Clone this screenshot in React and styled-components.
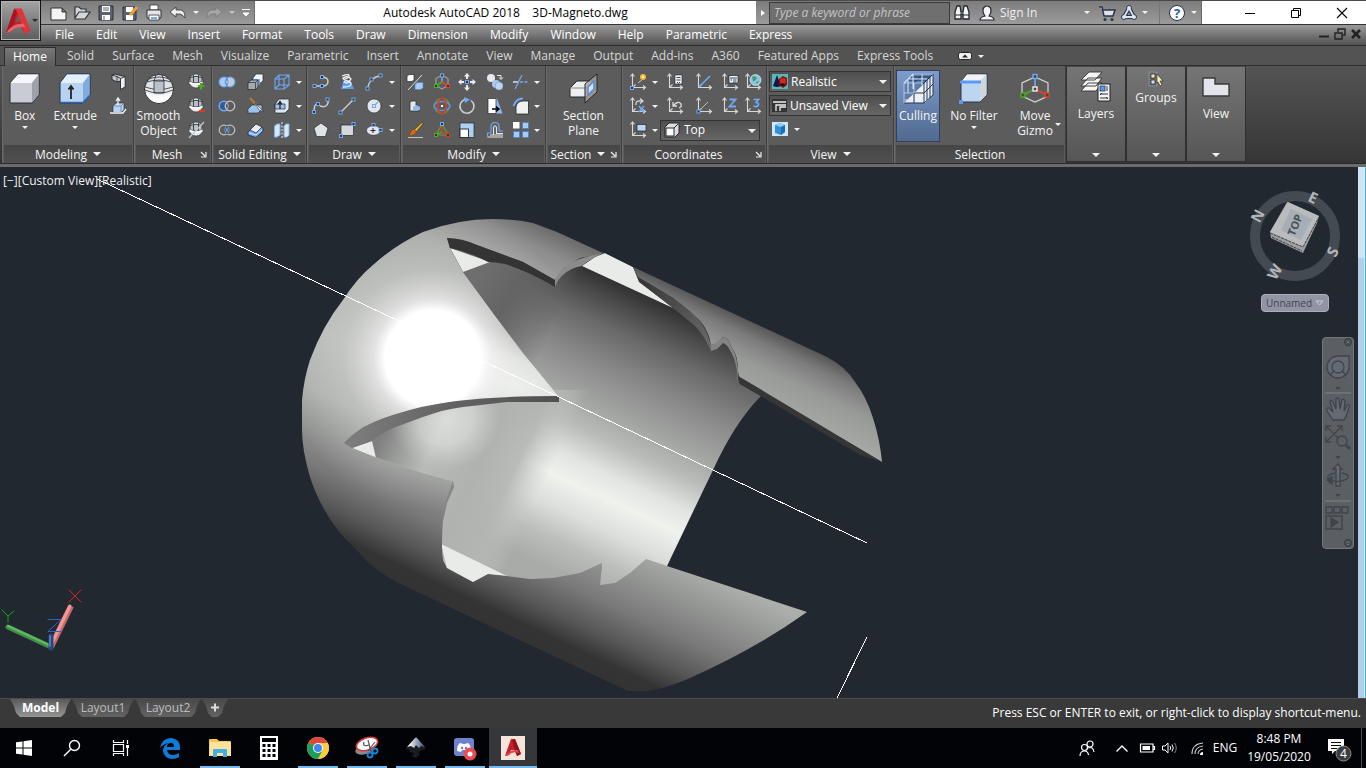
import React from 'react';
import styled, { createGlobalStyle, css } from 'styled-components';

const GlobalStyle = createGlobalStyle`
  * { box-sizing: border-box; }
  html, body { margin: 0; padding: 0; background: #212830; }
  body, button, input, select {
    font-family: "Open Sans", "Noto Sans", sans-serif;
    font-size: 12px;
    line-height: 15px;
  }
  button { margin: 0; padding: 0; border: 0; background: none; color: inherit; cursor: pointer; }
`;

/* ---------- shared parts ---------- */

const Page = styled.div`
  display: flex;
  flex-direction: column;
  min-height: 100vh;
`;

const Svg = styled.svg`
  display: block;
  flex: none;
  overflow: visible;
  width: ${(p) => p.$w || p.$s || 18}px;
  height: ${(p) => p.$h || p.$s || 18}px;
`;

const Caret = styled.span`
  display: block;
  flex: none;
  width: 0;
  height: 0;
  border: ${(p) => p.$size || 3}px solid transparent;
  border-top-color: ${(p) => p.$color || '#f2f2f2'};
  border-bottom: 0;
`;

/* ---------- header ---------- */

const Header = styled.header`
  display: grid;
  grid-template-columns: 41px 1fr;
  grid-template-rows: 24px 22px;
  background: #fff;
`;

const AppButton = styled.button`
  grid-area: 1 / 1 / 3 / 2;
  z-index: 1;
  height: 41px;
  border: 1px solid #111;
  background: linear-gradient(#a4a4a4, #5c5c5c);
  box-shadow: inset 0 0 0 1px #b4b4b4;
  display: flex;
  align-items: center;
  justify-content: center;
`;

const TitleRow = styled.div`
  grid-area: 1 / 2;
  display: flex;
  border-top: 1px solid #4a4a4a;
`;

const barGray = css`
  background: linear-gradient(#7c7c7c, #9b9b9b);
  border-right: 1px solid #6a6a6a;
`;

const QuickBar = styled.div`
  ${barGray}
  width: 214px;
  display: flex;
  align-items: center;
  padding-left: 8px;
  gap: 6px;
`;

const FlatButton = styled.button`
  display: flex;
  align-items: center;
  justify-content: center;
  height: 100%;
`;

const Title = styled.h1`
  flex: 1;
  margin: 0;
  font-size: 12px;
  font-weight: 400;
  line-height: 23px;
  text-align: center;
  white-space: pre;
  color: #000;
`;

const InfoCenter = styled.div`
  ${barGray}
  width: 446px;
  display: flex;
  align-items: center;
`;

const ArrowTab = styled.button`
  width: 13px;
  height: 22px;
  color: #fff;
  display: flex;
  align-items: center;
  justify-content: center;
`;

const Search = styled.input`
  width: 181px;
  height: 22px;
  border: 1px solid #3a3a3a;
  background: #6f6f6f;
  color: #fff;
  padding: 0 4px;
  font-style: italic;
  &::placeholder { color: #c4c4c4; opacity: 1; }
`;

const InfoIcons = styled.div`
  flex: 1;
  display: flex;
  align-items: center;
  gap: 4px;
  padding: 0 4px 0 2px;
  color: #f0f0f0;
  height: 100%;
`;

const SignIn = styled.button`
  flex: 1;
  display: flex;
  align-items: center;
  gap: 4px;
  padding: 0 4px 0 2px;
`;

const SignInText = styled.span`
  flex: 1;
  text-align: left;
`;

const Divider = styled.span`
  width: 1px;
  margin: 0 3px 0 7px;
  align-self: stretch;
  background: #777;
`;

const WindowButtons = styled.div`
  width: 164px;
  display: grid;
  grid-template-columns: repeat(3, 46px);
  justify-content: end;
  padding-right: 1px;
`;

const MenuBar = styled.nav`
  grid-area: 2 / 1 / 3 / 3;
  display: flex;
  align-items: center;
  justify-content: space-between;
  padding: 0 4px 2px 55px;
  background: linear-gradient(#9a9a9a, #515151);
  border-top: 1px solid #333;
  border-bottom: 1px solid #2c2c2c;
  color: #fff;
`;

const MenuItems = styled.div`
  display: flex;
  gap: 22px;
`;

const DocButtons = styled.div`
  display: flex;
  align-items: center;
  gap: 4px;
`;

/* ---------- ribbon ---------- */

const TabStrip = styled.div`
  display: flex;
  align-items: flex-end;
  height: 20px;
  padding-left: 4px;
  background: #535353;
  border-bottom: 1px solid #2e2e2e;
`;

const RibbonTab = styled.button`
  height: 18px;
  padding: 0 ${(p) => (p.$active ? 8 : 9)}px;
  line-height: 16px;
  color: ${(p) => (p.$active ? '#fff' : '#d6d6d6')};
  ${(p) => p.$active && css`
    height: 19px;
    margin-bottom: -1px;
    margin-right: 2px;
    background: linear-gradient(#787878, #5c5c5c);
    border: 1px solid #2e2e2e;
    border-bottom: 0;
  `}
`;

const Collapse = styled.button`
  display: flex;
  align-items: center;
  gap: 6px;
  height: 18px;
  margin-left: 16px;
`;

const Ribbon = styled.div`
  display: flex;
  height: 101px;
  padding-left: 2px;
  background: linear-gradient(#545454, #353535);
  border-bottom: 3px solid #6b6b6b;
  box-shadow: inset 0 -1px 0 #2a2a2a;
  color: #f4f4f4;
`;

const Panel = styled.section`
  width: ${(p) => p.$w}px;
  display: flex;
  flex-direction: column;
  background: #5c5c5c;
  border-right: 1px solid #3f3f3f;
  box-shadow: inset 1px 0 0 #6a6a6a;
  margin-bottom: 1px;
`;

const PanelBody = styled.div`
  flex: 1;
  display: flex;
  padding: 4px ${(p) => p.$px || 0}px 0;
`;

const PanelTitle = styled.h2`
  margin: 0 1px 0 2px;
  padding-right: ${(p) => (p.$launcher ? 12 : 0)}px;
  height: 18px;
  font-size: 12px;
  font-weight: 400;
  line-height: 17px;
  background: linear-gradient(#464646, #505050);
  display: flex;
  align-items: center;
  justify-content: center;
  gap: 6px;
  position: relative;
`;

const Launcher = styled.button`
  position: absolute;
  right: 3px;
  top: 6px;
`;

const IconGrid = styled.div`
  display: grid;
  grid-template-columns: ${(p) => p.$cols};
  grid-auto-rows: 24px;
  align-content: start;
`;

const IconButton = styled.button`
  display: grid;
  place-items: center;
  min-width: 0;
`;

const BigButton = styled.button`
  width: ${(p) => p.$w}px;
  height: 72px;
  padding-top: 2px;
  display: flex;
  flex-direction: column;
  align-items: center;
  position: relative;
  border: 1px solid transparent;
  ${(p) => p.$on && css`
    background: linear-gradient(#7d9ccb, #50698f);
    border-color: #2f4060;
  `}
`;

const BigLabel = styled.span`
  margin: 3px 0;
  white-space: pre-line;
  text-align: center;
`;

const SideCaret = styled.span`
  position: absolute;
  right: 0;
  bottom: 15px;
`;

const Drop = styled.div`
  position: relative;
  display: flex;
  align-items: center;
  align-self: center;
  grid-column: ${(p) => (p.$wide ? 'span 4' : 'auto')};
  width: ${(p) => (p.$wide ? '100px' : 'auto')};
  height: 21px;
  padding-left: 2px;
  border: 1px solid #333;
  background: linear-gradient(#4f4f4f, #666);
  & > ${Caret} { position: absolute; right: 3px; top: 8px; pointer-events: none; }
`;

const DropSelect = styled.select`
  appearance: none;
  flex: 1;
  min-width: 0;
  height: 19px;
  border: 0;
  padding: 0 0 1px 3px;
  background: transparent;
  color: #fff;
`;

const ViewStack = styled.div`
  width: 122px;
  display: flex;
  flex-direction: column;
  gap: 3px;
  padding-top: 1px;
  & > ${Drop} { align-self: stretch; }
`;

const ViewCubeButton = styled.button`
  display: flex;
  align-items: center;
  gap: 6px;
  padding: 3px 0 0 3px;
`;

const Folded = styled.button`
  width: 60px;
  height: 96px;
  display: flex;
  flex-direction: column;
  align-items: center;
  padding: 4px 0;
  background: linear-gradient(#757575, #565656);
  border: 1px solid #303030;
  border-top-color: #4a4a4a;
  & > ${Caret} { margin-top: auto; }
`;

const FoldedLabel = styled.span`
  margin-top: 3px;
`;

/* ---------- drawing area ---------- */

const Workspace = styled.main`
  flex: 1;
  display: flex;
  min-height: 400px;
  border-bottom: 1px solid #4e4a50;
`;

const Viewport = styled.div`
  flex: 1;
  position: relative;
  background: #212830;
  overflow: hidden;
`;

const Drawing = styled.svg`
  position: absolute;
  inset: 0;
  width: 100%;
  height: 100%;
`;

const ViewLabel = styled.div`
  position: absolute;
  left: 3px;
  top: 6px;
  color: #f0f0f0;
`;

const Compass = styled.div`
  position: absolute;
  right: 16px;
  top: 22px;
  display: flex;
  flex-direction: column;
  align-items: center;
  gap: 11px;
`;

const UcsMenu = styled.button`
  width: 68px;
  height: 18px;
  border-radius: 4px;
  background: #9195a3;
  border: 1px solid #aaaebb;
  color: #40454f;
  font-size: 10px;
  display: flex;
  align-items: center;
  justify-content: space-between;
  padding: 0 4px;
`;

const NavBar = styled.div`
  position: absolute;
  right: 4px;
  top: 170px;
  width: 32px;
  height: 212px;
  border-radius: 4px;
  background: #5b5f63;
  border: 1px solid #74787b;
`;

const SideStrip = styled.div`
  width: 8px;
  background: linear-gradient(#d3e3f3 0 90px, #b4cde9 92px);
  border-right: 1px solid #30b7e8;
  box-shadow: inset -1px 0 0 #d9ecfa;
`;

const StatusBar = styled.div`
  height: 29px;
  display: flex;
  justify-content: space-between;
  padding: 0 5px 0 10px;
  background: #393939;
  color: #fff;
`;

const LayoutTabs = styled.div`
  display: flex;
  gap: 1px;
`;

const LayoutTab = styled.button`
  height: 18px;
  width: ${(p) => p.$w}px;
  padding-bottom: 2px;
  clip-path: polygon(0 0, 100% 0, calc(100% - 4px) 7px, calc(100% - 6px) 14px, calc(100% - 10px) 100%, 10px 100%, 6px 14px, 4px 7px);
  background: ${(p) => (p.$active ? 'linear-gradient(#5a5a5a, #959595)' : 'linear-gradient(#484848, #636363)')};
  color: ${(p) => (p.$active ? '#fff' : '#bdbdbd')};
  font-weight: ${(p) => (p.$active ? 700 : 400)};
`;

const Prompt = styled.p`
  margin: 0;
  line-height: 28px;
`;

/* ---------- taskbar ---------- */

const Taskbar = styled.footer`
  height: 40px;
  display: flex;
  justify-content: space-between;
  background: #020307;
  color: #fff;
`;

const TaskGroup = styled.div`
  display: flex;
`;

const Task = styled.button`
  width: ${(p) => p.$w || 49}px;
  height: 40px;
  display: grid;
  place-items: center;
  background: ${(p) => (p.$active ? '#35373b' : 'transparent')};
  ${(p) => p.$open && css`
    background-image: linear-gradient(#76b9ed, #76b9ed);
    background-repeat: no-repeat;
    background-position: bottom center;
    background-size: ${p.$active ? '100%' : '40px'} 2px;
  `}
`;

const Tray = styled.div`
  display: flex;
  align-items: center;
  padding-right: 4px;
`;

const TrayButton = styled.button`
  width: ${(p) => p.$w}px;
  height: 40px;
  display: grid;
  place-items: center;
  line-height: 18px;
  white-space: pre-line;
`;

const ShowDesktop = styled.button`
  width: 1px;
  height: 40px;
  background: #4c4f55;
`;

/* ---------- icons ---------- */

const B = '#6ea8f7';
const W = '#f2f2f2';
const K = '#23262b';

const Handle = ({ x, y, c = B }) => (
  <rect x={x - 1.5} y={y - 1.5} width="3" height="3" fill="#333" stroke={c} />
);

const Globe = ({ extra }) => (
  <>
    <circle cx="8" cy="8" r="7" fill="#e8eaec" stroke={K} strokeWidth=".6" />
    <path d="M2 4.500Q8 2 14 4.500L14 9Q8 11 2 9ZM5.500 2V9.500M10.500 2V9.500" fill="#b8bfc7" stroke="#30353b" strokeWidth=".9" />
    <path d="M1.500 9.500Q8 12.500 14.500 9.500" stroke="#fff" strokeWidth="1.500" fill="none" />
    {extra}
  </>
);

const Axes = ({ children }) => (
  <>
    <path d="M3.500 1.500V14.500H16M1.500 3.500L3.500 1L5.500 3.500M14 12.500L16.500 14.500L14 16.500M3.500 14.500L6.500 11.500" fill="none" stroke="#d8d8d8" strokeWidth="1.100" />
    {children}
  </>
);

const icons = {
  presspull: <><path d="M3 2L6 1L16 3.500V14L11.500 16.500V8L8 9L3 6.500Z" fill="#c3c8ce" stroke={K} strokeWidth=".9" /><path d="M3 2L8 3.500V9M8 3.500L11.500 5.500V8M11.500 5.500L16 3.500" fill="none" stroke={K} strokeWidth=".8" /><path d="M12 6.500L15.500 4.500V13.500L12 15.500Z" fill="#eef0f3" /></>,
  polysolid: <><path d="M4 9L7 6H15V13L12 15.500H4Z" fill="#b9d3ee" stroke={K} strokeWidth=".6" /><path d="M4 9H12V15.500M12 9L15 6" fill="none" stroke="#5f87b5" strokeWidth=".8" /><path d="M9 8V2M7 4L9 1L11 4M1 16H14L17 12" fill="none" stroke={W} strokeWidth="1.300" /></>,
  smoothMore: <Globe extra={<path d="M13 10V16.500M10 13H16.500" stroke="#4fae12" strokeWidth="2" />} />,
  smoothLess: <Globe extra={<path d="M11 14H17" stroke="#e23a20" strokeWidth="2.200" />} />,
  refine: <Globe extra={<path d="M1 17L16 1" stroke="#c8c8c8" strokeWidth="1.200" />} />,
  union: <><circle cx="6" cy="9" r="4.800" fill="#aecbf0" stroke={B} strokeWidth="1.300" /><circle cx="12" cy="9" r="4.800" fill="#dbe8f8" fillOpacity=".8" stroke={B} strokeWidth="1.300" /><path d="M9 5.500Q6.500 9 9 12.500Q11.500 9 9 5.500" fill="#e9f1fb" stroke="#4d83c8" /></>,
  subtract: <><circle cx="6" cy="9" r="4.800" fill="#335c94" stroke={B} strokeWidth="1.500" /><circle cx="12" cy="9" r="4.800" fill="#5c5c5c" stroke="#c9c9c9" strokeWidth="1.200" /><path d="M9 5.200Q12 9 9 12.800" fill="none" stroke="#aaa" /></>,
  intersect: <><circle cx="6" cy="9" r="4.800" fill="none" stroke="#c0c0c0" strokeWidth="1.200" /><circle cx="12" cy="9" r="4.800" fill="none" stroke="#c0c0c0" strokeWidth="1.200" /><path d="M9 5Q6 9 9 13Q12 9 9 5" fill="#75aef2" stroke="#2d578f" /></>,
  thicken: <><path d="M6 5L9 1H16V8L12 11H6Z" fill="#f2f4f6" stroke={K} strokeWidth=".7" /><path d="M4 9L7 6H13V11L10 14H4Z" fill="#6ea8f7" /><path d="M1 9.500L4 7H11V14L8.500 16.500H1Z" fill="#a6a9ae" stroke={K} strokeWidth=".7" /><path d="M1 9.500H8.500V16.500M8.500 9.500L11 7" fill="none" stroke={K} strokeWidth=".7" /></>,
  slice: <><path d="M1 12L5 8H15V12L11 16H1Z" fill="#9cc3ee" stroke={K} strokeWidth=".6" /><path d="M3 1L9.500 8" stroke="#b57a3a" strokeWidth="2" /><path d="M8 6L16.500 14.500L12 13Z" fill="#f4f4f4" stroke={K} strokeWidth=".5" /></>,
  interfere: <><path d="M1 11L9 3L16 7V10L9 16.500L1 14Z" fill="#6ea8f7" stroke={K} strokeWidth=".7" /><path d="M3 9L9 3L15 6L9 12Z" fill="#e9ebee" stroke={K} strokeWidth=".7" /><path d="M2 12L9 14L15 9" fill="none" stroke="#d5e6fa" /></>,
  extractEdges: <path d="M2 6H11V16H2ZM2 6L6 2H16V12L11 16M11 6L16 2M6 2V12H16M6 12L2 16" fill="none" stroke={B} strokeWidth="1.100" />,
  extrudeFaces: <><path d="M2 7L6 2H16V12L12 16H2Z" fill="#d9e6f5" stroke={K} strokeWidth=".7" /><path d="M2 7H12V12H2Z" fill="#9dc1ea" stroke={K} strokeWidth=".7" /><path d="M7 12V5M5 7.500L7 4.500L9 7.500" stroke={K} strokeWidth="1.300" fill="none" /></>,
  separate: <><path d="M1.500 5L4 3H7V14L4 16H1.500ZM11 5L13 3H16V14L14 16H11Z" fill="#d7e6f7" stroke="#7eb0ea" /><path d="M9 1V17" stroke="#eee" strokeDasharray="2 1.500" /></>,
  polyline: <><path d="M2.500 13H12Q16 12 16 8.500Q16 4 9 4" fill="none" stroke="#c7cbd0" strokeWidth="1.500" /><Handle x="2.500" y="13" /><Handle x="10" y="13" /><Handle x="10" y="4" /></>,
  helix: <><path d="M3 16L6 7H12L16 16Z" fill="#5f9ff0" /><path d="M4 3Q12 0 11 4Q5 8 5 5Q10 2 13 6Q10 12 6 9Q8 6 13 10Q14 14 5 14" fill="none" stroke="#f0f0f0" strokeWidth="1.300" /></>,
  arc: <><path d="M2.500 15.500Q4 5 15.500 2.500" fill="none" stroke="#c7cbd0" strokeWidth="1.500" /><Handle x="2.500" y="15.500" /><Handle x="6.500" y="6.500" /><Handle x="15.500" y="2.500" /></>,
  spline: <><path d="M2 15Q2 6 6 7Q11 12 15 8Q17 5 15.500 3" fill="none" stroke="#c7cbd0" strokeWidth="1.500" /><Handle x="2" y="15" /><Handle x="6" y="7" /><Handle x="15.500" y="2.500" /></>,
  line: <><path d="M2 16L16 2" stroke="#c7cbd0" strokeWidth="1.400" /><Handle x="2.500" y="15.500" /><Handle x="15.500" y="2.500" /></>,
  circle: <><circle cx="9" cy="9" r="7" fill="#e3e6ea" stroke={K} strokeWidth=".6" /><path d="M9 9L13 5" stroke={B} strokeWidth="1.200" /><rect x="7.500" y="7.500" width="3" height="3" fill="#e3e6ea" stroke={B} /></>,
  polygon: <path d="M9 2L16 7L13.500 15.500H4.500L2 7Z" fill="#dfe3e7" stroke={K} strokeWidth=".7" />,
  rectangle: <><rect x="3" y="4" width="12.500" height="10.500" fill="#d3d8dd" stroke={K} strokeWidth=".7" /><Handle x="3" y="15" /><Handle x="15.500" y="3" /></>,
  ellipse: <><ellipse cx="8.500" cy="9.500" rx="7" ry="4.800" fill="#e3e6ea" stroke={K} strokeWidth=".6" /><path d="M8 7V12M5.500 9.500H10.500" stroke={K} /><Handle x="8.500" y="4" /><Handle x="15.500" y="9" /></>,
  align3d: <><path d="M1 3.500L3 1.500H8V6.500L6 8.500H1Z" fill="#fff" stroke={K} strokeWidth=".7" /><path d="M9 11.500L11 9.500H17V14.500L15 16.500H9Z" fill="#a9cbf1" stroke="#4f86c6" strokeWidth=".7" /><path d="M2 17L16 2" stroke="#ddd" /></>,
  move3d: <><path d="M9 2L15 5.500V12.500L9 16L3 12.500V5.500Z" fill="none" stroke="#999" strokeWidth="1.300" /><path d="M9 2V9" stroke={B} strokeWidth="1.600" /><path d="M9 9L3 13" stroke="#4caf1e" strokeWidth="1.600" /><path d="M9 9L15 13" stroke="#e0432a" strokeWidth="1.600" /><Handle x="3" y="13" c="#4caf1e" /><Handle x="15" y="13" c="#e0432a" /><Handle x="9" y="2.500" /></>,
  move: <><path d="M9 0L12 3.500H10V6H8V3.500H6ZM9 18L6 14.500H8V12H10V14.500H12ZM0 9L3.500 6V8H6V10H3.500V12ZM18 9L14.500 12V10H12V8H14.500V6Z" fill="#e8ecf0" /><rect x="7.500" y="7.500" width="3" height="3" fill="#333" stroke={B} /></>,
  copy: <><circle cx="5" cy="5" r="4" fill="#e8eaed" /><circle cx="10" cy="11" r="4" fill="#aac8ef" /><circle cx="13" cy="13" r="4" fill="#bcd5f3" stroke="#6a8fbc" strokeWidth=".5" /><path d="M11 2.500H15V6M13 4.500L15 6.500L17 4.500" fill="none" stroke="#eee" /></>,
  trim: <><path d="M1 9H6" stroke={W} strokeWidth="1.300" /><path d="M8 9H17" stroke={B} strokeWidth="1.300" strokeDasharray="3 1.500" /><path d="M3 16L10 2" stroke={B} strokeWidth="1.300" /></>,
  mirror3d: <><path d="M4 5L6 4H10V9L13 10V14H4Z" fill="#e4e8ec" stroke={K} strokeWidth=".7" /><path d="M7 10L10 8L14 10V13H7Z" fill="#8ebbf0" /></>,
  rotate3d: <><circle cx="9" cy="9" r="7.500" fill="none" stroke="#5ba32d" strokeWidth="1.200" /><ellipse cx="9" cy="9" rx="8" ry="4.500" fill="none" stroke="#5d93dd" strokeWidth="1.700" /><ellipse cx="9" cy="9" rx="4.200" ry="8" fill="none" stroke="#dd3b25" strokeWidth="1.700" /><rect x="8" y="8" width="2" height="2" fill="#fff" /></>,
  rotate: <><path d="M7 2.500A7 7 0 1 0 13 3.500" fill="none" stroke="#d0d3d6" strokeWidth="1.500" /><path d="M6 0L12 2.500L7 6Z" fill={B} /></>,
  stretch: <><path d="M2 1.500H11L16.500 16.500H2Z" fill="#8fbcf0" /><path d="M2 1.500H10V16.500H2Z" fill="#fff" stroke={K} strokeWidth=".7" /><path d="M6 12H12M10 9.500L13 12L10 14.500" fill="none" stroke="#000" strokeWidth="1.500" /></>,
  fillet: <><path d="M4 17V10Q5 4 11 4H16.500V17Z" fill="#eef0f2" stroke={K} strokeWidth=".8" /><path d="M1.500 9Q4 1.500 11 1.500" fill="none" stroke={B} strokeWidth="1.800" /></>,
  erase: <><path d="M16.500 1L8 9L10 11L17 3Z" fill="#f0b72b" stroke={K} strokeWidth=".6" /><path d="M8 8L10.500 11Q8 15 3 15Q4 13 4.500 11Q6 8 8 8Z" fill="#d56a1f" stroke="#6b2d0b" strokeWidth=".5" /><path d="M2 16.500H17" stroke="#ddd" strokeWidth=".8" /></>,
  scale3d: <><path d="M9 3L3 14H15Z" fill="none" stroke="#5ba32d" strokeWidth="1.200" /><path d="M9 3V11L15 14" stroke="#dd3b25" fill="none" strokeWidth="1.500" /><path d="M9 11L3 14" stroke="#5ba32d" strokeWidth="1.500" /><Handle x="9" y="3" /><Handle x="3" y="14" c="#5ba32d" /><Handle x="15" y="14" c="#dd3b25" /></>,
  scale: <><rect x="2" y="2" width="14" height="14.500" fill="#aed0f5" stroke={K} strokeWidth=".7" /><rect x="2" y="8" width="8.500" height="8.500" fill="#fff" stroke={K} strokeWidth=".9" /></>,
  offset: <><path d="M1.500 15.500V12H5V6Q5 1.500 9 1.500Q13 1.500 13 6V10H17" fill="none" stroke={B} strokeWidth="1.200" /><path d="M4 14H7.500V6.500Q9 3 10.500 6.500V12.500H17M1.500 16H17M4 14H17" fill="none" stroke="#e6e9ec" strokeWidth="1.100" /></>,
  array: <><rect x="1" y="1" width="6.500" height="6.500" fill="#fff" /><path d="M10.500 1.500H16.500V7.500H10.500ZM1.500 10.500H7.500V16.500H1.500ZM10.500 10.500H16.500V16.500H10.500Z" fill="#a9cbf1" stroke="#4f86c6" /></>,
  ucs: <Axes><path d="M9 10L14 6" stroke="#ccc" /><circle cx="14" cy="4" r="3" fill="#ffb52e" /><circle cx="14" cy="4" r="1.300" fill="#fff6b0" /><Handle x="3" y="15" /></Axes>,
  ucsNamed: <Axes><rect x="9" y="2" width="7" height="9" fill="#f4f4f4" stroke={K} strokeWidth=".6" /><path d="M10.500 4.500H14.500M10.500 7H14.500M11 9L12.500 10.500L14 9" stroke="#345" fill="none" /></Axes>,
  ucsObject: <Axes><path d="M4 14L15 3" stroke={B} strokeWidth="1.600" /></Axes>,
  ucsManage: <Axes><rect x="8" y="2.500" width="9" height="7.500" fill="#f4f4f4" stroke={K} strokeWidth=".7" /><path d="M9 5H16M9.500 7H11M12 7H15.500M12 9H15.500" stroke="#345" /></Axes>,
  ucsWorld: <Axes><circle cx="11.500" cy="7" r="5.500" fill="#8fc4dd" stroke="#dff" strokeWidth=".6" /><path d="M8 4Q11 2 13 5Q11 9 9 8ZM12 9L15 8L13 11Z" fill="#3f9a77" /></Axes>,
  ucsX: <Axes><path d="M7 8Q6 3 13 4M11 1.500L14 4L11 6.500" fill="none" stroke="#ddd" strokeWidth="1.200" /><path d="M10 9L15 15M15 9L10 15" stroke={B} strokeWidth="1.700" /></Axes>,
  ucsPrev: <Axes><path d="M7 5V9H11M7 9Q12 3 15 7Q16 10 13 11" fill="none" stroke="#ddd" strokeWidth="1.300" /></Axes>,
  ucsOrigin: <Axes><path d="M4 14L13 5" stroke="#bbb" /><Handle x="3.500" y="14.500" /></Axes>,
  ucsZ: <Axes><path d="M8.500 2.500H14.500L8.500 9.500H15" fill="none" stroke={B} strokeWidth="1.800" /></Axes>,
  ucs3: <Axes><path d="M9.500 2.500H14.500L12 5.500Q15 6 14.500 8Q13 10.500 9.500 9" fill="none" stroke={B} strokeWidth="1.700" /></Axes>,
  ucsView: <Axes><rect x="8" y="3.500" width="9" height="6.500" fill="#b9d6f6" stroke={K} strokeWidth=".7" /></Axes>,
};

const bigIcons = {
  box: <><path d="M1 10L9 1H30V22L23 30H1Z" fill="#c9ccd4" stroke="#2b2d31" /><path d="M1.500 10L9 1.500H29.500L22.500 10Z" fill="#f7f7f9" /><path d="M23 10L29.500 2V22L23 29.500Z" fill="#9da1ab" /></>,
  extrude: <><path d="M1 10L8 1H31V22L24 30H1Z" fill="#b7d3f0" stroke="#1f3350" /><path d="M1.500 10L8 1.500H30.500L24 10Z" fill="#e4f0fc" /><path d="M24 10L30.500 2V22L24 29.500Z" fill="#7fabdf" /><path d="M1 29.500H24L31 22" stroke="#2b66b5" strokeWidth="1.500" fill="none" /><path d="M12 26V13M9.500 16.500L12 13L14.500 16.500" fill="none" stroke="#20242a" strokeWidth="1.800" /></>,
  smooth: <><circle cx="16" cy="16" r="14.500" fill="#e9ebee" stroke="#2b2d31" /><path d="M2 14Q16 19 30 14Q29 9 26 6Q16 2 6 6Q3 9 2 14Z" fill="#dfe2e6" stroke="#2b2d31" strokeWidth=".8" /><path d="M11 8H21V20H11Z" fill="#b8c2cd" stroke="#2b2d31" strokeWidth=".8" /><path d="M4 9Q16 5 28 9M11 8L13 2M21 8L19 2M2 17Q16 23 30 17" fill="none" stroke="#2b2d31" strokeWidth=".8" /><path d="M3 20Q16 25 29 20Q26 29 16 30Q6 29 3 20" fill="#fafafa" /></>,
  section: <><path d="M2 15L9 8H24V19L18 24H2Z" fill="#eceef0" stroke={K} /><path d="M2 15H18V24M18 15L24 8" fill="none" stroke="#888" /><path d="M17 11L29 1V19L17 30Z" fill="#b5a79c" fillOpacity=".75" stroke={K} /><path d="M20 14L26 8V16L20 22Z" fill="#cfe2f8" stroke="#4f8be0" strokeWidth="1.500" /></>,
  culling: <><path d="M12 2H31V22L23 30H2V12Z" fill="#5c7cad" /><path d="M2 30L31 2V22L23 30Z" fill="#eef0f3" /><path d="M2 10H22V30H2ZM2 10L11 1H31L22 10M31 1V22L22 30M2 20H22L31 11M12 10V30M12 10L21 1M5 7H25V27M8 4H28V25" fill="none" stroke="#1f3558" strokeWidth="1" /><path d="M2 30V10L11 1H31M2 20H12M12 20V10M3 27H10M6 7V20M11 1V16M2 10H20M6 6H25M20 1V12" fill="none" stroke="#cfe2fb" strokeWidth="1.100" /></>,
  filter: <><path d="M3 9L9 1H29V22L22 29H3Z" fill="#bcd6f2" stroke="#24364d" /><path d="M3 9L9 1.500H28.500L22 8Z" fill="#f2f2f4" /><path d="M22 9L28.500 2V22L22 28.500Z" fill="#d2d5da" /><path d="M2 9H23" stroke="#5a98f2" strokeWidth="3" /><rect x="1" y="27" width="4" height="4" fill="#5a98f2" /></>,
  gizmo: <><path d="M16 4L29 10V23L16 29L3 23V10Z" fill="none" stroke="#d5d5d5" strokeWidth="1.200" /><path d="M16 4V16" stroke={B} strokeWidth="1.600" /><path d="M16 16L4 22" stroke="#4caf1e" strokeWidth="1.600" /><path d="M16 16L28 22" stroke="#e0432a" strokeWidth="1.600" /><rect x="14" y="1.500" width="4" height="4" fill="#444" stroke={B} strokeWidth="1.400" /><rect x="14" y="14" width="4" height="4" fill="#444" stroke="#eee" strokeWidth="1.400" /><rect x="2" y="20" width="4" height="4" fill="#444" stroke="#4caf1e" strokeWidth="1.400" /><rect x="26" y="20" width="4" height="4" fill="#444" stroke="#e0432a" strokeWidth="1.400" /></>,
  layers: <><path d="M1 20L8 12H22L16 20ZM1 15L8 7H22L16 15ZM1 9L9 1H22L15 9Z" fill="#f4f4f4" stroke="#333" strokeWidth=".9" /><rect x="18" y="13" width="12" height="17" fill="#f2f4f6" stroke="#222" /><rect x="20" y="15" width="5" height="5" fill="#5a98f2" stroke="#222" strokeWidth=".7" /><path d="M27 15V20M20 23H28M20 27H28M22 22L20 24M26 26L28 28" stroke="#333" fill="none" /></>,
  view: <path d="M3 7H15V13H29V25H3Z" fill="#e4e5ea" stroke="#3a3a3a" strokeWidth="1.400" />,
};

const Small = ({ name, label }) => (
  <IconButton aria-label={label || name}>
    <Svg viewBox="0 0 18 18" aria-hidden="true">{icons[name]}</Svg>
  </IconButton>
);
const CaretButton = ({ label }) => (
  <IconButton aria-label={`${label} options`}><Caret /></IconButton>
);

const Big = ({ name, w, text, caret, on, side }) => (
  <BigButton $w={w} $on={on}>
    <Svg $s={32} viewBox="0 0 32 32" aria-hidden="true">{bigIcons[name]}</Svg>
    <BigLabel>{text}</BigLabel>
    {caret && <Caret />}
    {side && <SideCaret><Caret /></SideCaret>}
  </BigButton>
);

const LauncherIcon = ({ label }) => (
  <Launcher aria-label={label}>
    <Svg $s={7} viewBox="0 0 7 7" aria-hidden="true"><path d="M1 1L5 5M6 1V6H1" fill="none" stroke="#eee" strokeWidth="1.200" /></Svg>
  </Launcher>
);

const PanelBox = ({ w, title, caret, launcher, px, children }) => (
  <Panel $w={w}>
    <PanelBody $px={px}>{children}</PanelBody>
    <PanelTitle $launcher={launcher}>
      {title}
      {caret && <Caret $size={4} />}
      {launcher && <LauncherIcon label={`${title} settings`} />}
    </PanelTitle>
  </Panel>
);

const Cells = ({ cols, rows }) => (
  <IconGrid $cols={cols}>
    {rows.flat().map((n, i) => (n === '>' ? <CaretButton key={i} label={rows.flat()[i - 1]} /> : <Small key={i} name={n} />))}
  </IconGrid>
);

/* ---------- logos ---------- */

const AutocadLogo = ({ size }) => (
  <Svg $s={size} viewBox="0 0 28 30" aria-hidden="true">
    <path d="M1 28L10 2H18L27 25L21 29L17 20H10L7 26Z" fill="#c3202b" />
    <path d="M10 2H18L27 25L21 29L13 5Z" fill="#e0343c" />
    <path d="M1 28L10 2L13 5L7 26Z" fill="#a81520" />
    <path d="M11 16L14 8L17 16Z" fill="#6d5a5a" />
    <path d="M1 28Q8 17 20 18L22 22Q12 20 7 26Z" fill="#e7656a" />
  </Svg>
);

/* ---------- 3D model ---------- */

const cutout =
  'M447 238L450 248L463 272L493 313L523 353L559 397L503 399L457 401L423 407L393 415L363 427L344 443L352 448L375 457L423 473L453 481L454 487L447 503L443 520L442 545L443 560L447 568L473 582L488 574L507 576L530 579L553 578L580 573L602 563L600 585L615 583L630 573L646 559L667 566L713 470Q735 422 761 396L740 384L738 372L732 348L723 337L717 343L711 345L707 332L697 318L673 298L638 277L633 267L605 253L580 258L565 267L555 280L523 262L477 245Z';

const hull =
  'M302 400Q304 378 310 360Q323 325 343 300Q357 278 373 265Q395 245 423 232Q458 219 493 219Q515 219 533 223L557 232L603 253L633 267L740 384L667 566L807 612Q757 648 690 678Q662 690 645 691H628L407 587Q374 572 357 550Q350 544 340 533Q320 508 310 477Q302 450 302 430Z';

const Model = () => (
  <Drawing viewBox="0 167 1358 531" preserveAspectRatio="xMinYMin meet" role="img" aria-label="Shaded 3D magneto housing">
    <defs>
      <linearGradient id="outer" gradientUnits="userSpaceOnUse" x1="540" y1="223" x2="376" y2="572">
        <stop offset="0" stopColor="#6a6a6a" />
        <stop offset=".06" stopColor="#8c8c8c" />
        <stop offset=".16" stopColor="#a6a8a5" />
        <stop offset=".5" stopColor="#b6b8b5" />
        <stop offset=".64" stopColor="#acaeab" />
        <stop offset=".72" stopColor="#959795" />
        <stop offset=".82" stopColor="#787878" />
        <stop offset=".9" stopColor="#565656" />
        <stop offset=".96" stopColor="#343434" />
        <stop offset="1" stopColor="#333" />
      </linearGradient>
      <radialGradient id="glow" gradientUnits="userSpaceOnUse" cx="433" cy="358" r="150">
        <stop offset="0" stopColor="#fff" />
        <stop offset=".32" stopColor="#fff" />
        <stop offset=".4" stopColor="#f4f4f4" stopOpacity=".7" />
        <stop offset=".6" stopColor="#e4e6e3" stopOpacity=".3" />
        <stop offset="1" stopColor="#ddd" stopOpacity="0" />
      </radialGradient>
      <radialGradient id="tongue">
        <stop offset="0" stopColor="#f2f4f1" />
        <stop offset=".5" stopColor="#eceeeb" stopOpacity=".8" />
        <stop offset="1" stopColor="#ddd" stopOpacity="0" />
      </radialGradient>
      <linearGradient id="inner" gradientUnits="userSpaceOnUse" x1="640" y1="290" x2="516" y2="553">
        <stop offset="0" stopColor="#2e2e2e" />
        <stop offset=".08" stopColor="#4c4c4c" />
        <stop offset=".16" stopColor="#686868" />
        <stop offset=".27" stopColor="#848484" />
        <stop offset=".42" stopColor="#a2a4a2" />
        <stop offset=".52" stopColor="#bbbdba" />
        <stop offset=".62" stopColor="#e2e4e1" />
        <stop offset=".7" stopColor="#f0f2ee" />
        <stop offset=".8" stopColor="#dcdedb" />
        <stop offset=".9" stopColor="#bcbebb" />
        <stop offset="1" stopColor="#a9aba9" />
      </linearGradient>
      <linearGradient id="innerCap" gradientUnits="userSpaceOnUse" x1="400" y1="397" x2="552" y2="469">
        <stop offset="0" stopColor="#808080" />
        <stop offset=".12" stopColor="#989a98" />
        <stop offset=".3" stopColor="#b8bab7" />
        <stop offset=".6" stopColor="#b0b2af" />
        <stop offset=".8" stopColor="#b4b6b3" stopOpacity=".9" />
        <stop offset="1" stopColor="#c8cac7" stopOpacity="0" />
      </linearGradient>
      <linearGradient id="innerTop" gradientUnits="userSpaceOnUse" x1="480" y1="275" x2="560" y2="315">
        <stop offset="0" stopColor="#6e6e6e" />
        <stop offset=".4" stopColor="#646464" />
        <stop offset="1" stopColor="#606060" stopOpacity="0" />
      </linearGradient>
      <linearGradient id="flap" gradientUnits="userSpaceOnUse" x1="730" y1="312" x2="698" y2="380">
        <stop offset="0" stopColor="#585858" />
        <stop offset=".2" stopColor="#7c7c7c" />
        <stop offset=".5" stopColor="#989a98" />
        <stop offset="1" stopColor="#a9aba9" />
      </linearGradient>
      <linearGradient id="lip" x1="0" x2="1" y1="0" y2="0">
        <stop offset="0" stopColor="#7e7e7e" />
        <stop offset=".5" stopColor="#636363" />
        <stop offset="1" stopColor="#505050" />
      </linearGradient>
      <linearGradient id="edge" gradientUnits="userSpaceOnUse" x1="638" y1="280" x2="711" y2="345">
        <stop offset="0" stopColor="#343434" />
        <stop offset="1" stopColor="#6a6a6a" />
      </linearGradient>
      <clipPath id="hullClip"><path d={hull} /></clipPath>
      <clipPath id="cutClip"><path d={cutout} /></clipPath>
    </defs>

    <path d={hull} fill="url(#outer)" />
    <g clipPath="url(#hullClip)">
      <ellipse cx="515" cy="385" rx="95" ry="50" fill="url(#tongue)" transform="rotate(25 515 385)" />
      <circle cx="433" cy="358" r="150" fill="url(#glow)" />
    </g>

    <path d={cutout} fill="url(#inner)" />
    <g clipPath="url(#cutClip)">
      <path d="M340 390H600V600H340Z" fill="url(#innerCap)" />
      <ellipse cx="445" cy="420" rx="55" ry="50" fill="url(#tongue)" opacity=".6" />
      <path d="M440 230H640V396H440Z" fill="url(#innerTop)" />
      <g fill="#e9ebe8">
        <path d="M450 248L490 262L463 272Z" />
        <path d="M582 266L595 257L605 253L633 267L640 282L673 308Z" />
        <path d="M352 448L372 441L376 458Z" />
        <path d="M441 544L507 576L488 574L473 582L447 568Z" />
      </g>
    </g>

    <path d="M447 238Q462 238 477 245L523 262L555 280V287Q530 272 505 264Q495 262 488 262Q470 252 450 248Z" fill="#343434" />
    <path d="M555 280Q560 270 567 265Q580 257 603 253Q590 259 582 266Q570 268 563 275Q558 279 555 287Z" fill="#8b8b8b" />
    <path d="M559 396Q500 396 457 401Q423 405 393 415Q360 425 344 443L352 448L372 441Q380 434 393 428L423 417Q445 409 463 407L507 402H559Z" fill="url(#lip)" />
    <path d="M453 481L454 487L447 503L443 522L441 530Q443 505 453 481Z" fill="#858785" />
    <path d="M602 563L600 585L601 568Z" fill="#858785" />

    <path d="M633 267L827 357Q846 367 855 382Q866 396 873 418Q880 440 882 462L740 379L738 372Q738 355 732 348Q728 337 723 337L717 343L711 345Q709 335 707 332Q703 323 697 318L673 298L638 277Z" fill="url(#flap)" />
    <path d="M633 267L638 277L673 298Q690 310 697 318Q705 325 711 345V351Q704 335 695 326L673 308L639 282Z" fill="url(#edge)" />
    <path d="M711 345L717 342L723 337Q728 337 732 348Q738 356 738 376V383Q737 362 731 352Q727 344 723 343L717 349L711 351Z" fill="#838383" />
    <path d="M738 376L745 380L882 462L860 455L739 383Z" fill="#363636" />

    <path d="M97 179L401 322M485 362L867 543M867 637L837 698" fill="none" stroke="#fff" strokeWidth="1" shapeRendering="crispEdges" />

    <g fill="none" strokeLinecap="round">
      <path d="M51 647L71 606" stroke="#c46a6a" strokeWidth="6" strokeLinecap="butt" />
      <path d="M50 647L70 606" stroke="#f09a98" strokeWidth="3" />
      <path d="M8 627L49 646" stroke="#3f8f45" strokeWidth="5" />
      <path d="M8 626L49 645" stroke="#63b866" strokeWidth="2" />
      <path d="M51 636V648" stroke="#2b4676" strokeWidth="5" />
      <path d="M50 636V646" stroke="#4a7ac2" strokeWidth="2" />
      <path d="M69 590L81 602M81 590L69 602" stroke="#e02020" />
      <path d="M2 610L8 616L14 611M8 616V622" stroke="#12a812" />
      <path d="M48 619.500H61L48 631.500H61" stroke="#2f5fd0" />
    </g>
  </Drawing>
);

const CubeSvg = () => (
  <Svg $w={94} $h={94} viewBox="1248 189 94 94" role="img" aria-label="View cube">
    <circle cx="1295" cy="236" r="40" fill="none" stroke="#434a52" strokeWidth="10" />
    <path d="M1287 202L1319 216L1317 223L1303 253L1271 238L1270 232Z" fill="#9c9ea0" />
    <path d="M1288 202L1319 216L1303 247L1270 232Z" fill="#b9bbbc" />
    <path d="M1270 233L1303 247L1319 217M1272 237L1302 251" fill="none" stroke="#3e4248" strokeWidth="1" strokeDasharray="3 1" />
    <path d="M1291 209L1312 219L1301 240L1281 230Z" fill="#a5afb5" />
    <g fontFamily="Open Sans, sans-serif" fontWeight="700" textAnchor="middle" fill="#b4b6b8">
      <text x="1295" y="229" fontSize="11" fill="#4a5056" transform="rotate(-68 1295 225)">TOP</text>
      <text x="1258" y="221" fontSize="15" transform="rotate(-62 1258 216)">N</text>
      <text x="1313" y="203" fontSize="15" transform="rotate(25 1313 198)">E</text>
      <text x="1333" y="257" fontSize="15" transform="rotate(-62 1333 252)">S</text>
      <text x="1275" y="277" fontSize="15" transform="rotate(-60 1275 272)">W</text>
    </g>
  </Svg>
);

const NavIcons = () => (
  <Svg $w={30} $h={210} viewBox="1323 338 30 210" role="img" aria-label="Navigation tools">
    <g fill="none" stroke="#3f444c" strokeWidth="1.300">
      <circle cx="1348" cy="342" r="3.500" fill="#4b4f54" /><path d="M1346.500 340.500L1349.500 343.500M1349.500 340.500L1346.500 343.500" stroke="#74787b" strokeWidth=".8" />
      <path d="M1338 356H1349V367A11 11 0 1 1 1338 356Z" fill="#646a74" /><circle cx="1338" cy="367" r="6" /><path d="M1334 371L1330 375M1342 371L1346 375" />
      <path d="M1335 387H1341L1338 390ZM1335 456H1341L1338 459ZM1335 494H1341L1338 497Z" fill="#3f444c" stroke="none" />
      <path d="M1325 393H1351M1325 501H1351" stroke="#74787b" />
      <path d="M1333 420L1327 411Q1326 407 1329 408L1333 412L1330 402Q1331 399 1333 402L1336 409L1336 399Q1338 397 1339 399L1340 409L1342 400Q1344 398 1345 401L1344 411L1347 405Q1350 404 1349 407Q1347 416 1344 420Z" fill="#646a74" />
      <path d="M1327 427L1341 441M1341 427L1327 441M1326 431V426H1331M1337 426H1342V431M1326 437V442H1331" />
      <circle cx="1342" cy="441" r="5" fill="#5b5f63" /><path d="M1346 445L1350 449" strokeWidth="3" />
      <path d="M1336 486V469H1333L1338 464L1342 469H1340V486Z" fill="#646a74" /><path d="M1335 473Q1326 475 1328 479Q1338 484 1347 479Q1351 475 1342 473" /><path d="M1327 480L1332 477V484Z" fill="#3f444c" />
      <path d="M1326 507H1332V513H1326ZM1334 507H1340V513H1334ZM1342 507H1348V513H1342ZM1326 516H1342V529H1326Z" />
      <path d="M1331 518L1338 522L1331 527Z" fill="#3f444c" />
      <circle cx="1348" cy="543" r="3.500" fill="#4b4f54" /><path d="M1346 542H1350M1347 544L1348 545L1349 544" stroke="#74787b" strokeWidth=".8" />
    </g>
  </Svg>
);

/* ---------- app ---------- */

const quick = [
  ['New', <path key="a" d="M2 4H13L17 8V16H2Z M13 4V8H17" fill="#f4f4f4" stroke="#333" />],
  ['Open', <path key="a" d="M2 14V3H6L8 5H13V8H17L12 15H2ZM2 14L6 8H14" fill="#d4d7da" stroke="#333" strokeWidth="1.200" />],
  ['Save', <g key="a"><path d="M2 2H16V16H2Z" fill="#5a6470" stroke="#2b3138" /><path d="M5 2H13V8H5ZM5 11H13V16H5Z" fill="#fff" /><path d="M6 4H12M6 6H12M7 12V16" stroke="#5a6470" /></g>],
  ['Save as', <g key="a"><path d="M2 3H15V16H2Z" fill="#5a6470" stroke="#2b3138" /><path d="M5 3H12V8H5ZM5 11H12V16H5Z" fill="#fff" /><path d="M9 11L16 3" stroke="#f0a32b" strokeWidth="3" /></g>],
  ['Plot', <g key="a"><path d="M5 1H13V6H5Z" fill="#fff" stroke="#333" strokeWidth=".8" /><path d="M2 6H16V14H2Z" fill="#e4e6e9" stroke="#333" /><path d="M4 11H14V16H4Z" fill="#fff" stroke="#333" strokeWidth=".8" /><path d="M6 14H12" stroke="#6ea8f7" strokeWidth="2" /></g>],
  ['Undo', <path key="a" d="M1 8L7 3V6H12Q16 7 16 14Q13 10 11 10H7V13Z" fill="#eceef0" stroke="#333" strokeWidth=".8" />],
];

const menus = ['File', 'Edit', 'View', 'Insert', 'Format', 'Tools', 'Draw', 'Dimension', 'Modify', 'Window', 'Help', 'Parametric', 'Express'];
const tabs = ['Home', 'Solid', 'Surface', 'Mesh', 'Visualize', 'Parametric', 'Insert', 'Annotate', 'View', 'Manage', 'Output', 'Add-ins', 'A360', 'Featured Apps', 'Express Tools'];

export default function App() {
  return (
    <Page>
      <GlobalStyle />
      <Header>
        <AppButton aria-label="Application menu">
          <AutocadLogo size={28} />
          <Caret $color="#2a2a2a" />
        </AppButton>
        <TitleRow>
          <QuickBar>
            {quick.map(([label, art]) => (
              <FlatButton key={label} aria-label={label}><Svg viewBox="0 0 18 18" aria-hidden="true">{art}</Svg></FlatButton>
            ))}
            <FlatButton aria-label="Undo list"><Caret /></FlatButton>
            <FlatButton aria-label="Redo">
              <Svg viewBox="0 0 18 18" aria-hidden="true"><path d="M17 8L11 3V6H6Q2 7 2 14Q5 10 7 10H11V13Z" fill="#a6a6a6" stroke="#777" strokeWidth=".8" /></Svg>
            </FlatButton>
            <FlatButton aria-label="Redo list"><Caret $color="#c4c4c4" /></FlatButton>
            <FlatButton aria-label="Customize">
              <Svg $s={10} viewBox="0 0 10 10" aria-hidden="true"><path d="M1 1.500H9M2 5H8L5 8Z" stroke="#fff" fill="#fff" /></Svg>
            </FlatButton>
          </QuickBar>
          <Title>{'Autodesk AutoCAD 2018    3D-Magneto.dwg'}</Title>
          <InfoCenter>
            <ArrowTab aria-label="Expand search">
              <Svg $s={6} viewBox="0 0 6 6" aria-hidden="true"><path d="M1 0L5 3L1 6Z" fill="#fff" /></Svg>
            </ArrowTab>
            <Search placeholder="Type a keyword or phrase" aria-label="Search help" />
            <InfoIcons>
              <FlatButton aria-label="Search">
                <Svg $s={20} viewBox="0 0 20 20" aria-hidden="true"><path d="M3 9L5 3H8L9 9H11L12 3H15L17 9V16H11V11H9V16H3Z" fill="#f4f4f4" stroke="#24282e" strokeWidth="1.300" /><path d="M3 12H9M11 12H17" stroke="#24282e" /></Svg>
              </FlatButton>
              <SignIn>
                <Svg $w={18} $h={18} viewBox="0 0 18 18" aria-hidden="true"><path d="M2 16Q2 13 7 12Q4 8 5.500 4Q9 0 12.500 4Q14 8 11 12Q16 13 16 16Z" fill="#f4f4f4" stroke="#24282e" strokeWidth="1.200" /></Svg>
                <SignInText>Sign In</SignInText>
                <Caret />
              </SignIn>
              <FlatButton aria-label="Store">
                <Svg viewBox="0 0 18 18" aria-hidden="true"><path d="M1 3H4L6 12H15L17 6H5" fill="#dfe3e8" stroke="#27344c" strokeWidth="1.500" /><circle cx="7" cy="15.500" r="1.500" fill="#27344c" /><circle cx="14" cy="15.500" r="1.500" fill="#27344c" /></Svg>
              </FlatButton>
              <FlatButton aria-label="Autodesk apps">
                <Svg viewBox="0 0 18 18" aria-hidden="true"><path d="M9 4L4 13H14Z" fill="none" stroke="#27344c" strokeWidth="4" strokeLinejoin="round" /><circle cx="9" cy="4" r="2.500" fill="#dfe6f2" stroke="#27344c" /><circle cx="4" cy="13" r="2.500" fill="#dfe6f2" stroke="#27344c" /><circle cx="14" cy="13" r="2.500" fill="#dfe6f2" stroke="#27344c" /><path d="M9 4L4 13H14Z" fill="none" stroke="#dfe6f2" strokeWidth="1.800" /></Svg>
              </FlatButton>
              <Caret />
              <Divider />
              <FlatButton aria-label="Help">
                <Svg $s={20} viewBox="0 0 20 20" aria-hidden="true"><circle cx="10" cy="10" r="7.500" fill="#fff" stroke="#27344c" /><text x="10" y="15" textAnchor="middle" fontSize="13" fontWeight="700" fill="#2a5caa">?</text></Svg>
              </FlatButton>
              <Caret />
            </InfoIcons>
          </InfoCenter>
          <WindowButtons>
            <FlatButton aria-label="Minimize"><Svg $s={10} viewBox="0 0 10 10"><path d="M0 5.500H10" stroke="#000" /></Svg></FlatButton>
            <FlatButton aria-label="Restore"><Svg $s={10} viewBox="0 0 10 10"><path d="M.5 2.500H7.500V9.500H.5ZM2.500 2.500V.5H9.500V7.500H7.500" fill="none" stroke="#000" /></Svg></FlatButton>
            <FlatButton aria-label="Close"><Svg $s={10} viewBox="0 0 10 10"><path d="M0 0L10 10M10 0L0 10" stroke="#000" strokeWidth="1.100" /></Svg></FlatButton>
          </WindowButtons>
        </TitleRow>
        <MenuBar>
          <MenuItems>{menus.map((m) => <button key={m}>{m}</button>)}</MenuItems>
          <DocButtons>
            <FlatButton aria-label="Minimize drawing"><Svg $s={12} viewBox="0 0 12 12"><path d="M1 8.500H11" stroke="#222" strokeWidth="2" /></Svg></FlatButton>
            <FlatButton aria-label="Restore drawing"><Svg $s={12} viewBox="0 0 12 12"><path d="M1 5H8V11H1ZM4 4V1H11V7H9" fill="none" stroke="#222" strokeWidth="1.400" /></Svg></FlatButton>
            <FlatButton aria-label="Close drawing"><Svg $s={12} viewBox="0 0 12 12"><path d="M2 2L10 10M10 2L2 10" stroke="#222" strokeWidth="2.600" /></Svg></FlatButton>
          </DocButtons>
        </MenuBar>
      </Header>

      <TabStrip>
        {tabs.map((t, i) => <RibbonTab key={t} $active={i === 0}>{t}</RibbonTab>)}
        <Collapse aria-label="Minimize ribbon">
          <Svg $w={14} $h={8} viewBox="0 0 14 8"><rect x=".5" y=".5" width="13" height="7" rx="2" fill="#f0f0f0" stroke="#222" /><path d="M4 5.500L7 2.500L10 5.500Z" fill="#222" /></Svg>
          <Caret />
        </Collapse>
      </TabStrip>

      <Ribbon>
        <PanelBox w={132} title="Modeling" caret>
          <Big name="box" w={46} text="Box" caret />
          <Big name="extrude" w={56} text="Extrude" caret />
          <Cells cols="30px" rows={[['presspull'], ['polysolid']]} />
        </PanelBox>
        <PanelBox w={78} title="Mesh" launcher>
          <Big name="smooth" w={50} text={'Smooth\nObject'} />
          <Cells cols="28px" rows={[['smoothMore'], ['smoothLess'], ['refine']]} />
        </PanelBox>
        <PanelBox w={95} title="Solid Editing" caret>
          <Cells cols="30px 28px 24px 10px" rows={[['union', 'thicken', 'extractEdges', '>'], ['subtract', 'slice', 'extrudeFaces', '>'], ['intersect', 'interfere', 'separate', '>']]} />
        </PanelBox>
        <PanelBox w={94} title="Draw" caret>
          <Cells cols="28px 24px 30px 6px" rows={[['polyline', 'helix', 'arc', '>'], ['spline', 'line', 'circle', '>'], ['polygon', 'rectangle', 'ellipse', '>']]} />
        </PanelBox>
        <PanelBox w={145} title="Modify" caret>
          <Cells cols="28px 26px 24px 32px 20px 12px" rows={[['align3d', 'move3d', 'move', 'copy', 'trim', '>'], ['mirror3d', 'rotate3d', 'rotate', 'stretch', 'fillet', '>'], ['erase', 'scale3d', 'scale', 'offset', 'array', '>']]} />
        </PanelBox>
        <PanelBox w={76} title="Section" caret launcher>
          <Big name="section" w={76} text={'Section\nPlane'} />
        </PanelBox>
        <PanelBox w={145} title="Coordinates" launcher px={4}>
          <IconGrid $cols="24px 10px 30px 28px 24px 22px">
            <Small name="ucs" /><CaretButton label="UCS" /><Small name="ucsNamed" /><Small name="ucsObject" /><Small name="ucsManage" /><Small name="ucsWorld" />
            <Small name="ucsX" /><CaretButton label="UCS X" /><Small name="ucsPrev" /><Small name="ucsOrigin" /><Small name="ucsZ" /><Small name="ucs3" />
            <Small name="ucsView" /><CaretButton label="UCS view" />
            <Drop $wide>
              <Svg viewBox="0 0 18 18" aria-hidden="true"><path d="M2 6L6 2H16V12L12 16H2Z" fill="#ddd" stroke={K} /><path d="M3 7H11V15H3Z" fill="#fff" stroke={K} /><path d="M11 7L15 3" stroke={K} /></Svg>
              <DropSelect aria-label="UCS orientation" defaultValue="Top"><option>Top</option><option>Front</option></DropSelect>
              <Caret $size={4} />
            </Drop>
          </IconGrid>
        </PanelBox>
        <PanelBox w={127} title="View" caret px={2}>
          <ViewStack>
            <Drop>
              <Svg $w={16} $h={15} viewBox="0 0 16 15" aria-hidden="true"><path d="M0 0H16V15H0Z" fill="#58b8b8" /><path d="M1 12L5 1L9 12Q5 14 1 12Z" fill="#10174a" /><path d="M7 5L11 2L15 4V11L11 14L7 11Z" fill="#8a1010" /><circle cx="11" cy="7" r="3" fill="#d4281e" /><path d="M7 11L11 9L13 12Z" fill="#111" /></Svg>
              <DropSelect aria-label="Visual style" defaultValue="Realistic"><option>Realistic</option><option>Wireframe</option></DropSelect>
              <Caret $size={4} />
            </Drop>
            <Drop>
              <Svg $w={15} $h={15} viewBox="0 0 15 15" aria-hidden="true"><path d="M0 1H15V14H0Z" fill="#333" /><path d="M1 4H14M4 13V7H14M8 13V9H14" fill="none" stroke="#eee" strokeWidth="1.300" /></Svg>
              <DropSelect aria-label="Saved view" defaultValue="Unsaved View"><option>Unsaved View</option></DropSelect>
              <Caret $size={4} />
            </Drop>
            <ViewCubeButton aria-label="View cube display">
              <Svg $w={16} $h={14} viewBox="0 0 16 14" aria-hidden="true"><path d="M0 0H16V14H0Z" fill="#cfe6f7" /><path d="M3 3L8 1L13 3V10L9 13L3 11Z" fill="#2f8fd8" /><path d="M3 3L8 1L13 3L9 5Z" fill="#8fd0f5" /><path d="M9 5L13 3V10L9 13Z" fill="#1f6fb5" /></Svg>
              <Caret />
            </ViewCubeButton>
          </ViewStack>
        </PanelBox>
        <PanelBox w={172} title="Selection" px={2}>
          <Big name="culling" w={44} text="Culling" on />
          <Big name="filter" w={68} text="No Filter" caret />
          <Big name="gizmo" w={54} text={'Move\nGizmo'} side />
        </PanelBox>
        <Folded>
          <Svg $s={32} viewBox="0 0 32 32" aria-hidden="true">{bigIcons.layers}</Svg>
          <FoldedLabel>Layers</FoldedLabel>
          <Caret $size={4} />
        </Folded>
        <Folded>
          <Svg $s={16} viewBox="0 0 16 16" aria-hidden="true"><path d="M1 1H9V15H1Z" fill="none" stroke="#6ea8f7" strokeDasharray="1 1" /><rect x="3" y="3" width="4" height="4" fill="#f3e7a0" stroke="#222" strokeWidth=".7" /><rect x="3" y="9" width="4" height="4" fill="#d7dbe0" stroke="#222" strokeWidth=".7" /><path d="M9 3L15 10H12L14 14L12 15L10 11L9 12Z" fill="#f8f0b0" stroke="#222" strokeWidth=".6" /></Svg>
          <FoldedLabel>Groups</FoldedLabel>
          <Caret $size={4} />
        </Folded>
        <Folded>
          <Svg $s={32} viewBox="0 0 32 32" aria-hidden="true">{bigIcons.view}</Svg>
          <FoldedLabel>View</FoldedLabel>
          <Caret $size={4} />
        </Folded>
      </Ribbon>

      <Workspace>
        <Viewport>
          <Model />
          <ViewLabel>[−][Custom View][Realistic]</ViewLabel>
          <Compass>
            <CubeSvg />
            <UcsMenu>
              Unnamed
              <Svg $w={9} $h={6} viewBox="0 0 9 6" aria-hidden="true"><path d="M1 1H8L4.500 5Z" fill="none" stroke="#c9ccd6" /></Svg>
            </UcsMenu>
          </Compass>
          <NavBar><NavIcons /></NavBar>
        </Viewport>
        <SideStrip />
      </Workspace>

      <StatusBar>
        <LayoutTabs>
          <LayoutTab $w={61} $active>Model</LayoutTab>
          <LayoutTab $w={62}>Layout1</LayoutTab>
          <LayoutTab $w={66}>Layout2</LayoutTab>
          <LayoutTab $w={26} aria-label="New layout">
            <Svg $w={26} $h={9} viewBox="0 0 26 9" aria-hidden="true"><path d="M9 4.500H17M13 .5V8.500" stroke="#ddd" strokeWidth="2" /></Svg>
          </LayoutTab>
        </LayoutTabs>
        <Prompt>Press ESC or ENTER to exit, or right-click to display shortcut-menu.</Prompt>
      </StatusBar>

      <Taskbar>
        <TaskGroup>
          <Task $w={48} aria-label="Start"><Svg $s={16} viewBox="0 0 16 16"><path d="M0 2.300L6.500 1.400V7.500H0ZM7.500 1.200L16 0V7.500H7.500ZM0 8.500H6.500V14.600L0 13.700ZM7.500 8.500H16V16L7.500 14.800Z" fill="#fff" /></Svg></Task>
          <Task $w={48} aria-label="Search"><Svg $s={16} viewBox="0 0 16 16"><circle cx="10.500" cy="5.500" r="5" fill="none" stroke="#fff" strokeWidth="1.400" /><path d="M7 9L0 16" stroke="#fff" strokeWidth="1.400" /></Svg></Task>
          <Task $w={50} aria-label="Task view"><Svg $s={16} viewBox="0 0 16 16"><path d="M.5 0V2.500H10.500V0M.5 4.500H10.500V11.500H.5ZM.5 16V13.500H10.500V16M14.500 0V4M14.500 8V16" fill="none" stroke="#fff" strokeWidth="1.200" /><path d="M13 5H16V8H13Z" fill="#fff" /></Svg></Task>
          <Task aria-label="Edge"><Svg $s={21} viewBox="0 0 21 21"><path d="M0 10Q2 0 11 0Q21 1 20 12H7Q8 17 13 17Q16 17 19 15V19Q16 21 12 21Q4 20 3 13Q3 8 8 5Q3 6 0 10ZM7 9H14Q14 5 11 5Q7 5 7 9Z" fill="#0f7bd9" fillRule="evenodd" /></Svg></Task>
          <Task $open aria-label="File Explorer"><Svg $s={22} viewBox="0 0 22 22"><path d="M0 3Q0 2 1 2H8L10 4H21Q22 4 22 5V19H0Z" fill="#f5c84c" /><path d="M1 5H22V19H0Z" fill="#fde399" /><path d="M4 20V13Q4 12 5 12H17Q18 12 18 13V20H14V16H8V20Z" fill="#3fb0e6" /></Svg></Task>
          <Task aria-label="Calculator"><Svg $w={18} $h={24} viewBox="0 0 18 24"><path d="M0 0H18V24H0Z" fill="#fff" /><path d="M2 2H16V6H2Z" fill="#020307" /><path d="M2.500 9.500H15.500M2.500 14.500H15.500M2.500 19.500H15.500" stroke="#020307" strokeWidth="3" strokeDasharray="3 2" /></Svg></Task>
          <Task $open aria-label="Chrome"><Svg $s={22} viewBox="0 0 22 22"><circle cx="11" cy="11" r="11" fill="#fccb3d" /><path d="M11 11L1.500 5.500A11 11 0 0 1 20.500 5.500Z" fill="#dc4a3d" /><path d="M11 11L1.500 5.500A11 11 0 0 0 11 22L16 14Z" fill="#1d9d58" /><path d="M11 6H20.800A11 11 0 0 1 11 22L15.500 13.500Z" fill="#fccb3d" /><circle cx="11" cy="11" r="5" fill="#fff" /><circle cx="11" cy="11" r="4" fill="#4285f4" /></Svg></Task>
          <Task $open aria-label="Snipping Tool"><Svg $w={24} $h={22} viewBox="0 0 24 22"><ellipse cx="10" cy="12" rx="10" ry="5" fill="#8a8a8a" transform="rotate(-18 10 12)" /><ellipse cx="12" cy="7" rx="11" ry="6" fill="#fff" stroke="#d33b3b" strokeWidth="1.500" transform="rotate(-18 12 7)" /><path d="M9 5Q7 10 14 8M13 3L16 15M20 5L13 14" fill="none" stroke="#555" strokeWidth="1.200" /><circle cx="15" cy="18" r="2.500" fill="none" stroke="#1b86d6" strokeWidth="1.800" /><circle cx="20" cy="14" r="2.500" fill="none" stroke="#1b86d6" strokeWidth="1.800" /></Svg></Task>
          <Task $open aria-label="Inkscape"><Svg $s={22} viewBox="0 0 22 22"><defs><linearGradient id="ink" x1="0" x2="1"><stop offset=".2" stopColor="#e8e8e8" /><stop offset="1" stopColor="#2e4a78" /></linearGradient></defs><path d="M1 12Q0 11 2 10L10 1Q11 0 12 1L20 10Q22 12 18 13L15 14Q12 15 15 17L11 21L7 19L9 16L4 15Q7 13 1 12Z" fill="#1b1c20" /><path d="M2 10L10 1Q11 0 12 1L20 10L16 9L14 11L11 8L9 11L6 9Z" fill="url(#ink)" /></Svg></Task>
          <Task $open aria-label="Discord"><Svg $s={22} viewBox="0 0 22 22"><rect x="0" y="1" width="20" height="18" rx="3" fill="#6f82cc" /><path d="M3 14Q3 8 6 6L9 7H11L14 6Q17 8 17 14L13 15L12 13H8L7 15Z" fill="#fff" /><circle cx="8" cy="11" r="1.300" fill="#6f82cc" /><circle cx="12" cy="11" r="1.300" fill="#6f82cc" /><circle cx="16" cy="17" r="6.500" fill="#ec4a52" /><circle cx="16" cy="17" r="2.500" fill="#fff" /></Svg></Task>
          <Task $w={48} $open $active aria-label="AutoCAD">
            <Svg $s={24} viewBox="0 0 24 24"><path d="M0 0H24V24H0Z" fill="#f6e3da" /><path d="M4 20L10 3H14L20 18L16 20L13.500 14H10L8 19Z" fill="#c3202b" /><path d="M14 3L20 18L16 20L11 5Z" fill="#8f141d" /><path d="M4 20Q9 13 17 14L18 17Q11 15 8 19Z" fill="#dd4046" /></Svg>
          </Task>
        </TaskGroup>
        <Tray>
          <TrayButton $w={36} aria-label="People"><Svg $s={16} viewBox="0 0 16 16"><circle cx="5.500" cy="7.500" r="3" fill="none" stroke="#fff" strokeWidth="1.200" /><path d="M1 16Q1 11 5.500 11Q9 11 9.500 15" fill="none" stroke="#fff" strokeWidth="1.200" /><circle cx="11" cy="4" r="3" fill="none" stroke="#fff" strokeWidth="1.200" /><path d="M9 8Q14 6 15 12" fill="none" stroke="#fff" strokeWidth="1.200" /></Svg></TrayButton>
          <TrayButton $w={34} aria-label="Show hidden icons"><Svg $w={12} $h={7} viewBox="0 0 12 7"><path d="M.5 6.500L6 1L11.500 6.500" fill="none" stroke="#fff" strokeWidth="1.400" /></Svg></TrayButton>
          <TrayButton $w={16} aria-label="Battery"><Svg $w={15} $h={10} viewBox="0 0 15 10"><path d="M.5 1H13V9H.5ZM13 3.500H14.500V6.500H13" fill="none" stroke="#fff" strokeWidth="1.200" /><path d="M2.500 3H10V7H2.500Z" fill="#fff" /></Svg></TrayButton>
          <TrayButton $w={30} aria-label="Volume"><Svg $w={16} $h={12} viewBox="0 0 16 12"><path d="M.5 4H3L6 1V11L3 8H.5Z" fill="none" stroke="#fff" /><path d="M8 4Q9.500 6 8 8M10 2.500Q12.500 6 10 9.500" fill="none" stroke="#fff" /><path d="M12.500 1Q16 6 12.500 11" fill="none" stroke="#888" /></Svg></TrayButton>
          <TrayButton $w={24} aria-label="Network"><Svg $s={13} viewBox="0 0 13 13"><path d="M1 12Q1 2 12 1M4 12Q4 5 12 4M7 12Q7 8 12 7" fill="none" stroke="#ccc" strokeWidth="1.100" /><path d="M9 13Q9 10 12 10V13Z" fill="#fff" /></Svg></TrayButton>
          <TrayButton $w={32}>ENG</TrayButton>
          <TrayButton $w={76}>{'8:48 PM\n19/05/2020'}</TrayButton>
          <TrayButton $w={44} aria-label="4 new notifications">
            <Svg $w={22} $h={24} viewBox="0 0 22 24"><path d="M0 3H16V15H7L4 18V15H0Z" fill="#fff" /><path d="M3 6.500H13M3 9.500H13M3 12.500H9" stroke="#020307" /><circle cx="15.500" cy="17.500" r="7.500" fill="#3b3d40" stroke="#8a8a8a" /><text x="15.500" y="22" textAnchor="middle" fontSize="12" fill="#fff">4</text></Svg>
          </TrayButton>
          <ShowDesktop aria-label="Show desktop" />
        </Tray>
      </Taskbar>
    </Page>
  );
}
